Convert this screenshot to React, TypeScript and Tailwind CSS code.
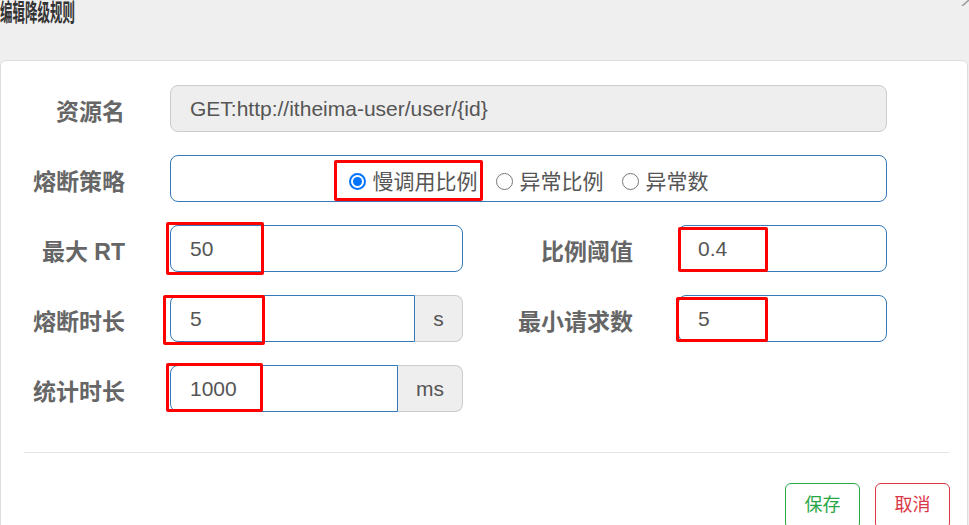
import { ReactNode } from "react";

const blue = "border-[#3579b8]";

function Label({ text, width }: { text: string; width: string }) {
  return (
    <div className={`${width} shrink-0 pt-[8px] text-right text-[23px] font-bold text-[#666] leading-none whitespace-nowrap`}>
      {text}
    </div>
  );
}

function Mark({ className }: { className: string }) {
  // red annotation box drawn over the screenshot
  return <div className={`absolute border-[3px] border-[#f00] rounded-[2px] pointer-events-none ${className}`} />;
}

function Field({
  value,
  width,
  mark,
  addon,
  addonWidth,
}: {
  value: string;
  width: string;
  mark?: ReactNode;
  addon?: string;
  addonWidth?: string;
}) {
  return (
    <div className={`relative ml-[45px] ${width} h-[47px] flex shrink-0`}>
      <div
        className={`flex-1 flex items-center bg-white border ${blue} px-[19px] text-[21px] text-[#555] ${
          addon ? "rounded-l-[8px]" : "rounded-[8px]"
        }`}
      >
        {value}
      </div>
      {addon && (
        <div
          className={`${addonWidth} flex items-center justify-center bg-[#eee] border border-l-0 border-[#ccc] rounded-r-[8px] text-[21px] text-[#555]`}
        >
          {addon}
        </div>
      )}
      {mark}
    </div>
  );
}

function Radio({ label, checked }: { label: string; checked?: boolean }) {
  return (
    <div className="flex items-center gap-[7px]">
      {checked ? (
        <span className="w-[17px] h-[17px] rounded-full border-2 border-[#0075ff] flex items-center justify-center">
          <span className="w-[9px] h-[9px] rounded-full bg-[#0075ff]" />
        </span>
      ) : (
        <span className="w-[17px] h-[17px] rounded-full border border-[#767676] bg-white" />
      )}
      <span className="text-[21px] text-[#555] leading-none">{label}</span>
    </div>
  );
}

export default function App() {
  return (
    <div className="min-h-screen bg-[#efefef] font-['Liberation_Sans','Noto_Sans_CJK_SC',sans-serif]">
      <div className="relative h-[60px]">
        <div className="inline-block origin-left scale-x-[0.52] text-[24px] leading-[26px] font-bold text-[#333] whitespace-nowrap">
          编辑降级规则
        </div>
        <svg className="absolute right-0 top-0" width="8" height="6" viewBox="0 0 8 6">
          <line x1="1" y1="6" x2="8" y2="0" stroke="#999" strokeWidth="1.5" />
        </svg>
      </div>

      <div className="w-[968px] min-h-[465px] bg-white border border-[#ddd] rounded-t-[6px] pt-[24px]">
        <div className="flex items-center">
          <Label text="资源名" width="w-[124px]" />
          <div className="ml-[45px] w-[717px] h-[47px] flex items-center bg-[#eee] border border-[#ccc] rounded-[8px] px-[19px] text-[21px] text-[#555]">
            GET:http://itheima-user/user/{"{id}"}
          </div>
        </div>

        <div className="flex items-center mt-[23px]">
          <Label text="熔断策略" width="w-[124px]" />
          <div className={`ml-[45px] w-[717px] h-[47px] pt-[6px] flex items-center justify-center gap-[18px] bg-white border ${blue} rounded-[8px]`}>
            <div className="relative">
              <Radio label="慢调用比例" checked />
              <Mark className="left-[-15px] top-[-11px] w-[149px] h-[41px]" />
            </div>
            <Radio label="异常比例" />
            <Radio label="异常数" />
          </div>
        </div>

        <div className="flex items-center mt-[23px]">
          <Label text="最大 RT" width="w-[124px]" />
          <Field value="50" width="w-[293px]" mark={<Mark className="left-[-4px] top-[-3px] w-[98px] h-[53px]" />} />
          <Label text="比例阈值" width="w-[170px]" />
          <Field value="0.4" width="w-[209px]" mark={<Mark className="left-0 top-[2px] w-[90px] h-[45px]" />} />
        </div>

        <div className="flex items-center mt-[23px]">
          <Label text="熔断时长" width="w-[124px]" />
          <Field
            value="5"
            width="w-[293px]"
            addon="s"
            addonWidth="w-[48px]"
            mark={<Mark className="left-[-7px] top-0 w-[102px] h-[50px]" />}
          />
          <Label text="最小请求数" width="w-[170px]" />
          <Field value="5" width="w-[209px]" mark={<Mark className="left-[-2px] top-[2px] w-[92px] h-[45px]" />} />
        </div>

        <div className="flex items-center mt-[23px]">
          <Label text="统计时长" width="w-[124px]" />
          <Field
            value="1000"
            width="w-[293px]"
            addon="ms"
            addonWidth="w-[65px]"
            mark={<Mark className="left-[-4px] top-[-2px] w-[97px] h-[49px]" />}
          />
        </div>

        <div className="ml-[23px] mr-[18px] mt-[40px] border-t border-[#e5e5e5]" />

        <div className="flex justify-end gap-[15px] mr-[17px] mt-[30px]">
          <button className="w-[75px] h-[46px] pt-[9px] flex justify-center items-start border border-[#28a745] rounded-[6px] text-[18px] leading-[24px] text-[#28a745] bg-white">
            保存
          </button>
          <button className="w-[75px] h-[46px] pt-[9px] flex justify-center items-start border border-[#dc3545] rounded-[6px] text-[18px] leading-[24px] text-[#dc3545] bg-white">
            取消
          </button>
        </div>
      </div>
    </div>
  );
}
